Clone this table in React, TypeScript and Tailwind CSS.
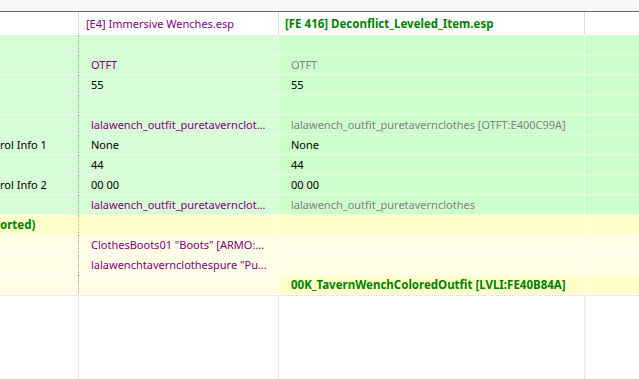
import React from "react";

type Tone = "purple" | "gray" | "black" | "green";

interface Cell {
  text?: string;
  tone?: Tone;
  bg: string;
}

interface Row {
  cells: [Cell, Cell, Cell, Cell];
}

const G1 = "bg-[#d6fdd6]";
const G2 = "bg-[#ccffcc]";
const Y1 = "bg-[#ffffcc]";
const Y2 = "bg-[#fffee6]";

const green = (a?: Cell, b?: Cell, c?: Cell): Row => ({
  cells: [
    { bg: G1, ...a },
    { bg: G1, ...b },
    { bg: G2, ...c },
    { bg: G2 },
  ],
});

const rows: Row[] = [
  green(),
  green({}, { text: "OTFT", tone: "purple" }, { text: "OTFT", tone: "gray" }),
  green({}, { text: "55", tone: "black" }, { text: "55", tone: "black" }),
  green(),
  green(
    {},
    { text: "lalawench_outfit_puretavernclot...", tone: "purple" },
    { text: "lalawench_outfit_puretavernclothes [OTFT:E400C99A]", tone: "gray" }
  ),
  green(
    { text: "rol Info 1", tone: "black" },
    { text: "None", tone: "black" },
    { text: "None", tone: "black" }
  ),
  green({}, { text: "44", tone: "black" }, { text: "44", tone: "black" }),
  green(
    { text: "rol Info 2", tone: "black" },
    { text: "00 00", tone: "black" },
    { text: "00 00", tone: "black" }
  ),
  green(
    {},
    { text: "lalawench_outfit_puretavernclot...", tone: "purple" },
    { text: "lalawench_outfit_puretavernclothes", tone: "gray" }
  ),
  {
    cells: [
      { bg: Y1, text: "orted)", tone: "green" },
      { bg: Y1 },
      { bg: Y1 },
      { bg: Y1 },
    ],
  },
  {
    cells: [
      { bg: Y2 },
      { bg: Y2, text: 'ClothesBoots01 "Boots" [ARMO:...', tone: "purple" },
      { bg: Y2 },
      { bg: Y2 },
    ],
  },
  {
    cells: [
      { bg: Y2 },
      { bg: Y2, text: 'lalawenchtavernclothespure "Pu...', tone: "purple" },
      { bg: Y2 },
      { bg: Y2 },
    ],
  },
  {
    cells: [
      { bg: Y2 },
      { bg: Y2 },
      {
        bg: Y1,
        text: "00K_TavernWenchColoredOutfit [LVLI:FE40B84A]",
        tone: "green",
      },
      { bg: Y1 },
    ],
  },
];

const toneClass: Record<Tone, string> = {
  purple: "text-[#800080]",
  gray: "text-[#868086]",
  black: "text-[#000000]",
  green: "text-[#008000] font-bold text-[11.5px]",
};

const widths = ["w-[79px]", "w-[200px]", "w-[306px]", "flex-1"];
const pads = ["pl-0", "pl-[12px]", "pl-[12px]", "pl-0"];
const rightBorders = [
  "border-r border-dotted border-r-[#a0a0a0]",
  "border-r border-dotted border-r-white",
  "border-r border-dotted border-r-white",
  "",
];

export default function App(): JSX.Element {
  return (
    <div
      className="w-[639px] h-[379px] flex flex-col bg-white overflow-hidden text-[11px] leading-none"
      style={{ fontFamily: '"Noto Sans", "Open Sans", sans-serif' }}
    >
      {/* toolbar strip */}
      <div className="h-[11px] bg-[#f7f7f7] shrink-0" />
      <div className="h-px bg-[#6b6b6b] shrink-0" />

      {/* column header */}
      <div className="flex h-[23px] shrink-0 bg-white">
        <div className="w-[79px] border-r border-[#dcdcdc]" />
        <div className="w-[200px] border-r border-[#dcdcdc] flex items-center pl-[7px] text-[#800080] whitespace-nowrap">
          [E4] Immersive Wenches.esp
        </div>
        <div className="w-[306px] border-r border-[#dcdcdc] flex items-center pl-[6px] text-[#008000] text-[11.5px] font-bold whitespace-nowrap">
          [FE 416] Deconflict_Leveled_Item.esp
        </div>
        <div className="flex-1" />
      </div>

      {/* record rows */}
      {rows.map((row, i) => (
        <div key={i} className="flex h-[20px] shrink-0">
          {row.cells.map((cell, j) => (
            <div
              key={j}
              className={`${widths[j]} ${pads[j]} ${cell.bg} ${rightBorders[j]} border-b border-dotted border-b-white flex items-center overflow-hidden whitespace-nowrap`}
            >
              {cell.text && (
                <span className={toneClass[cell.tone ?? "black"]}>
                  {cell.text}
                </span>
              )}
            </div>
          ))}
        </div>
      ))}

      {/* empty area below */}
      <div className="flex flex-1 border-t border-dotted border-t-[#d8d8d8]">
        <div className="w-[79px] border-r border-dotted border-r-[#d8d8d8]" />
        <div className="w-[200px] border-r border-dotted border-r-[#d8d8d8]" />
        <div className="w-[306px] border-r border-dotted border-r-[#d8d8d8]" />
        <div className="flex-1" />
      </div>
    </div>
  );
}
